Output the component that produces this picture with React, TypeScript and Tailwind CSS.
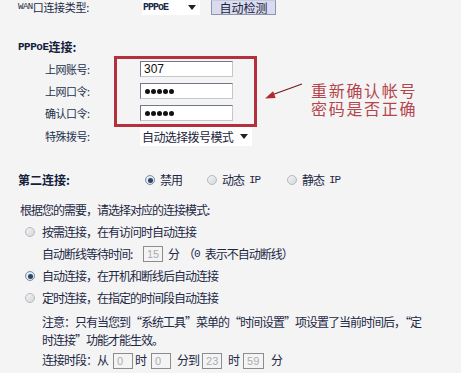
import React from "react";

const cjk = "font-['Noto_Sans_CJK_SC',sans-serif]";
const mono = "font-['Liberation_Mono',monospace]";

const Radio = ({ checked = false }: { checked?: boolean }) => (
  <span
    className={
      "inline-flex items-center justify-center w-[10px] h-[10px] rounded-full border shrink-0 " +
      (checked
        ? "border-[#7d8fa5] bg-[#dfe7f1]"
        : "border-[#b4b9c0] bg-gradient-to-br from-[#f4f4f4] to-[#d4d6da]")
    }
  >
    {checked && <span className="w-[5px] h-[5px] rounded-full bg-[#2c4668]"></span>}
  </span>
);

const Dots = () => (
  <div className="flex gap-[1px] pl-[4px]">
    {[...Array(5)].map((_, i) => (
      <span key={i} className="w-[5px] h-[5px] rounded-full bg-[#111]"></span>
    ))}
  </div>
);

const SmallBox = ({ value, w = "w-[20px]" }: { value: string; w?: string }) => (
  <span
    className={
      "inline-flex items-center h-[16px] border border-[#8c8c8c] pl-[3px] text-[11px] text-[#a8adb3] font-['Liberation_Sans',sans-serif] tracking-normal " +
      w
    }
  >
    {value}
  </span>
);

const Caret = () => (
  <svg width="8" height="5" viewBox="0 0 8 5">
    <path d="M0 0 L8 0 L4 5 Z" fill="#222" />
  </svg>
);

export default function App() {
  return (
    <div
      className={`w-[461px] h-[373px] overflow-hidden bg-[#f4f4f4] text-[#1c2844] text-[12px] tracking-[-1px] ${cjk}`}
    >
      {/* WAN type row */}
      <div className="flex items-center h-[15px] pl-[18px] text-[11px] tracking-[-0.3px]">
        <span className="w-[124px] flex items-center">
          <span className={`${mono} text-[9px] tracking-[-0.5px]`}>WAN</span>
          <span>口连接类型:</span>
        </span>
        <span className="flex items-center justify-between w-[58px] h-[15px] bg-white pl-[1px] pr-[4px]">
          <span className={`${mono} text-[10px] tracking-[-1px] font-bold`}>PPPoE</span>
          <Caret />
        </span>
        <span className="ml-[11px] flex items-center justify-center w-[65px] h-[15px] bg-[#d9dcf0] border border-[#8f93ab] border-t-[#c8cbe0] text-[12px] leading-[12px] tracking-[0px] text-[#1d2438]">
          自动检测
        </span>
      </div>

      {/* PPPoE section */}
      <div className="mt-[25px] h-[14px] flex items-center pl-[18px] font-bold text-[#13203c] tracking-normal">
        <span className={`${mono} text-[11px] tracking-[-0.5px]`}>PPPoE</span>
        <span>连接:</span>
      </div>

      <div className="mt-[2px] flex items-start">
        <div className="w-[69px] ml-[45px] pt-[2px] text-[11px] tracking-[-0.5px] text-[#23304c]">
          <div className="h-[22px] flex items-center">上网账号:</div>
          <div className="h-[22px] flex items-center">上网口令:</div>
          <div className="h-[22px] flex items-center">确认口令:</div>
        </div>
        <div className="border-[3px] border-[#b3303c] pl-[23px] pr-[21px] pt-[2px] pb-[3px] flex flex-col gap-[6px]">
          <div className="w-[93px] h-[16px] bg-white border border-[#6f7a86] border-b-[#c4c8cc] border-r-[#c4c8cc] flex items-center pl-[3px] text-[12px] text-[#111] tracking-normal font-['Liberation_Sans',sans-serif]">
            307
          </div>
          <div className="w-[93px] h-[16px] bg-white border border-[#6f7a86] border-b-[#c4c8cc] border-r-[#c4c8cc] flex items-center">
            <Dots />
          </div>
          <div className="w-[93px] h-[16px] bg-white border border-[#6f7a86] border-b-[#c4c8cc] border-r-[#c4c8cc] flex items-center">
            <Dots />
          </div>
        </div>
        <svg className="mt-[25px] shrink-0" width="54" height="25" viewBox="0 0 54 25">
          <line x1="16" y1="13.5" x2="45" y2="3" stroke="#7a1a1e" strokeWidth="1.3" />
          <path d="M8 17.5 L18.6 17 L16.1 10.2 Z" fill="#b02a30" />
        </svg>
        <div className="mt-[25px] text-[16px] leading-[18px] tracking-[1.7px] text-[#b5454d]">
          <div>重新确认帐号</div>
          <div>密码是否正确</div>
        </div>
      </div>

      <div className="flex items-center h-[19px] pl-[45px] text-[11px] tracking-[-0.5px] text-[#23304c]">
        <span className="w-[95px]">特殊拨号:</span>
        <span className="flex items-center justify-between w-[112px] h-[19px] bg-white pl-[2px] pr-[4px] text-[12px] tracking-[-0.6px] text-[#1d2438]">
          自动选择拨号模式
          <Caret />
        </span>
      </div>

      {/* second connection */}
      <div className="mt-[26px] flex items-center h-[16px] pl-[18px]">
        <span className="w-[127px] font-bold tracking-normal text-[#13203c]">第二连接:</span>
        <span className="w-[62px] flex items-center">
          <Radio checked />
          <span className="ml-[5px]">禁用</span>
        </span>
        <span className="w-[80px] flex items-center">
          <Radio />
          <span className="ml-[5px]">动态</span>
          <span className={`${mono} text-[11px] ml-[5px] tracking-[-1px]`}>IP</span>
        </span>
        <span className="flex items-center">
          <Radio />
          <span className="ml-[5px]">静态</span>
          <span className={`${mono} text-[11px] ml-[5px] tracking-[-1px]`}>IP</span>
        </span>
      </div>

      <div className="mt-[14px] h-[16px] flex items-center pl-[20px]">根据您的需要，请选择对应的连接模式:</div>

      <div className="mt-[3px]">
        <div className="h-[22px] flex items-center pl-[25px]">
          <Radio />
          <span className="ml-[7px]">按需连接，在有访问时自动连接</span>
        </div>
        <div className="h-[22px] flex items-center pl-[42px]">
          <span className="w-[101px]">自动断线等待时间:</span>
          <SmallBox value="15" />
          <span className="ml-[5px]">分</span>
          <span className="ml-[4px]">（</span>
          <span className={`${mono} text-[11px] tracking-normal`}>0</span>
          <span className="ml-[4px]">表示不自动断线）</span>
        </div>
        <div className="h-[22px] flex items-center pl-[25px]">
          <Radio checked />
          <span className="ml-[7px]">自动连接，在开机和断线后自动连接</span>
        </div>
        <div className="h-[22px] flex items-center pl-[25px]">
          <Radio />
          <span className="ml-[7px]">定时连接，在指定的时间段自动连接</span>
        </div>
      </div>

      <div className="mt-[4px] pl-[42px] pr-[20px] leading-[18px]">
        <div>注意：只有当您到“系统工具”菜单的“时间设置”项设置了当前时间后，“定</div>
        <div>时连接”功能才能生效。</div>
      </div>

      <div className="mt-[1px] h-[20px] flex items-center pl-[42px]">
        <span>连接时段：从</span>
        <span className="ml-[5px]"><SmallBox value="0" /></span>
        <span className="ml-[2px]">时</span>
        <span className="ml-[5px]"><SmallBox value="0" /></span>
        <span className="ml-[6px]">分到</span>
        <span className="ml-[3px]"><SmallBox value="23" /></span>
        <span className="ml-[6px]">时</span>
        <span className="ml-[4px]"><SmallBox value="59" w="w-[21px]" /></span>
        <span className="ml-[7px]">分</span>
      </div>
    </div>
  );
}
